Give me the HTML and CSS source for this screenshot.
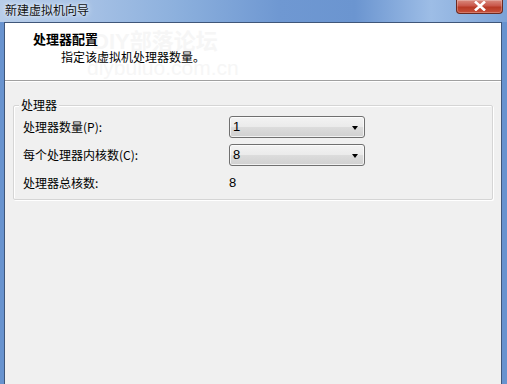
FILE: index.html
```html
<!DOCTYPE html>
<html lang="zh-CN">
<head>
<meta charset="utf-8">
<title>新建虚拟机向导</title>
<link rel="stylesheet" href="styles.css">
</head>
<body>
<div class="window">
  <div class="titlebar">
    <span class="title">新建虚拟机向导</span>
    <span class="close">
      <svg width="14" height="10" viewBox="0 0 14 10"><path d="M2 0.5 L12 9.5 M12 0.5 L2 9.5" stroke="#ffffff" stroke-width="2.6" fill="none"/></svg>
    </span>
  </div>
  <div class="frame">
    <div class="client">
      <div class="header">
        <div class="wm wm1">DIY部落论坛</div>
        <div class="wm wm2">diybuluo.com.cn</div>
        <div class="h-title">处理器配置</div>
        <div class="h-sub">指定该虚拟机处理器数量。</div>
      </div>
      <div class="body">
        <fieldset class="group">
          <legend>处理器</legend>
          <div class="row">
            <span class="label">处理器数量(P):</span>
            <span class="combo"><span class="val">1</span><span class="arrow"></span></span>
          </div>
          <div class="row">
            <span class="label">每个处理器内核数(C):</span>
            <span class="combo"><span class="val">8</span><span class="arrow"></span></span>
          </div>
          <div class="row">
            <span class="label">处理器总核数:</span>
            <span class="static">8</span>
          </div>
        </fieldset>
      </div>
    </div>
  </div>
</div>
</body>
</html>
```

FILE: styles.css
```css
html, body {
  margin: 0;
  padding: 0;
}
body {
  width: 507px;
  height: 384px;
  overflow: hidden;
  font-family: "Noto Sans CJK SC", "Noto Sans", sans-serif;
  font-size: 12px;
  color: #000;
}
.window {
  width: 507px;
  height: 384px;
  display: flex;
  flex-direction: column;
  background: #6893cf;
}
.titlebar {
  height: 22px;
  flex: none;
  display: flex;
  justify-content: space-between;
  align-items: flex-start;
  background: linear-gradient(to right, #b7cde9 0%, #a9c3e6 15%, #8cb0dd 35%, #6f98d2 55%, #6b95d0 70%, #9dbde6 85%, #8fb2df 92%, #7ba2d7 100%);
}
.title {
  padding: 3px 0 0 5px;
  line-height: 14px;
  font-size: 12px;
  color: #111;
  text-shadow: 0 0 6px #e8f0fa, 0 0 3px #e8f0fa;
}
.close {
  width: 45px;
  height: 13px;
  margin-right: 4px;
  border: 1px solid #6b2a22;
  border-top: none;
  border-radius: 0 0 4px 4px;
  background: linear-gradient(to bottom, #d98a7e 0%, #c9574a 45%, #b73a26 55%, #c8503a 100%);
  display: flex;
  align-items: center;
  justify-content: center;
  box-shadow: inset 0 0 0 1px rgba(255,255,255,0.25);
}
.close svg {
  display: block;
  margin-top: -1px;
}
.frame {
  flex: 1;
  display: flex;
  padding: 0 5px 0 4px;
  background: #6893cf;
}
.client {
  flex: 1;
  display: flex;
  flex-direction: column;
  border: 1px solid #3f5679;
  border-bottom: none;
  background: #f0f0f0;
}
.header {
  position: relative;
  height: 57px;
  background: #fff;
  border-bottom: 1px solid #a0a0a0;
  box-shadow: 0 1px 0 #ffffff;
  padding: 0 0 0 28px;
  overflow: hidden;
}
.wm {
  position: absolute;
  color: #f6f6f6;
  font-weight: bold;
  white-space: nowrap;
}
.wm1 {
  left: 88px;
  top: 6px;
  font-size: 22px;
  line-height: 26px;
  font-family: "Liberation Sans", "Noto Sans CJK SC", sans-serif;
}
.wm2 {
  left: 82px;
  top: 34px;
  font-size: 21px;
  line-height: 22px;
  font-weight: normal;
  font-family: "Liberation Sans", sans-serif;
}
.h-title {
  position: relative;
  margin-top: 8px;
  font-weight: bold;
  font-size: 13px;
  line-height: 16px;
}
.h-sub {
  position: relative;
  margin-top: 3px;
  padding-left: 28px;
  font-size: 12px;
  line-height: 14px;
}
.body {
  flex: 1;
  padding: 0 8px;
}
.group {
  margin: 17px 0 0 0;
  padding: 4px 9px 5px 9px;
  border: 1px solid #d5d5d5;
  border-radius: 2px;
  box-shadow: inset 1px 1px 0 #ffffff, 1px 1px 0 #ffffff;
  min-width: 0;
}
.group legend {
  margin-left: -4px;
  padding: 0 2px;
  line-height: 14px;
  font-size: 12px;
  background: #f0f0f0;
}
.row {
  height: 22px;
  display: flex;
  align-items: center;
  margin-bottom: 6px;
}
.row:last-child {
  margin-bottom: 0;
}
.label {
  width: 206px;
  flex: none;
  line-height: 14px;
}
.combo {
  height: 20px;
  width: 125px;
  border: 1px solid #707070;
  border-radius: 3px;
  background: linear-gradient(to bottom, #f3f3f3 0%, #ebebeb 48%, #dcdcdc 52%, #d0d0d0 100%);
  box-shadow: inset 0 0 0 1px rgba(255,255,255,0.7);
  display: flex;
  align-items: center;
  justify-content: space-between;
  padding: 0 6px 0 3px;
}
.val {
  font-family: "Liberation Sans", "Noto Sans", sans-serif;
  font-size: 13px;
  line-height: 14px;
}
.static {
  font-family: "Liberation Sans", "Noto Sans", sans-serif;
  font-size: 13px;
  line-height: 14px;
}
.arrow {
  width: 0;
  height: 0;
  border-left: 3.5px solid transparent;
  border-right: 3.5px solid transparent;
  border-top: 4px solid #000;
  margin-top: 1px;
}
```
